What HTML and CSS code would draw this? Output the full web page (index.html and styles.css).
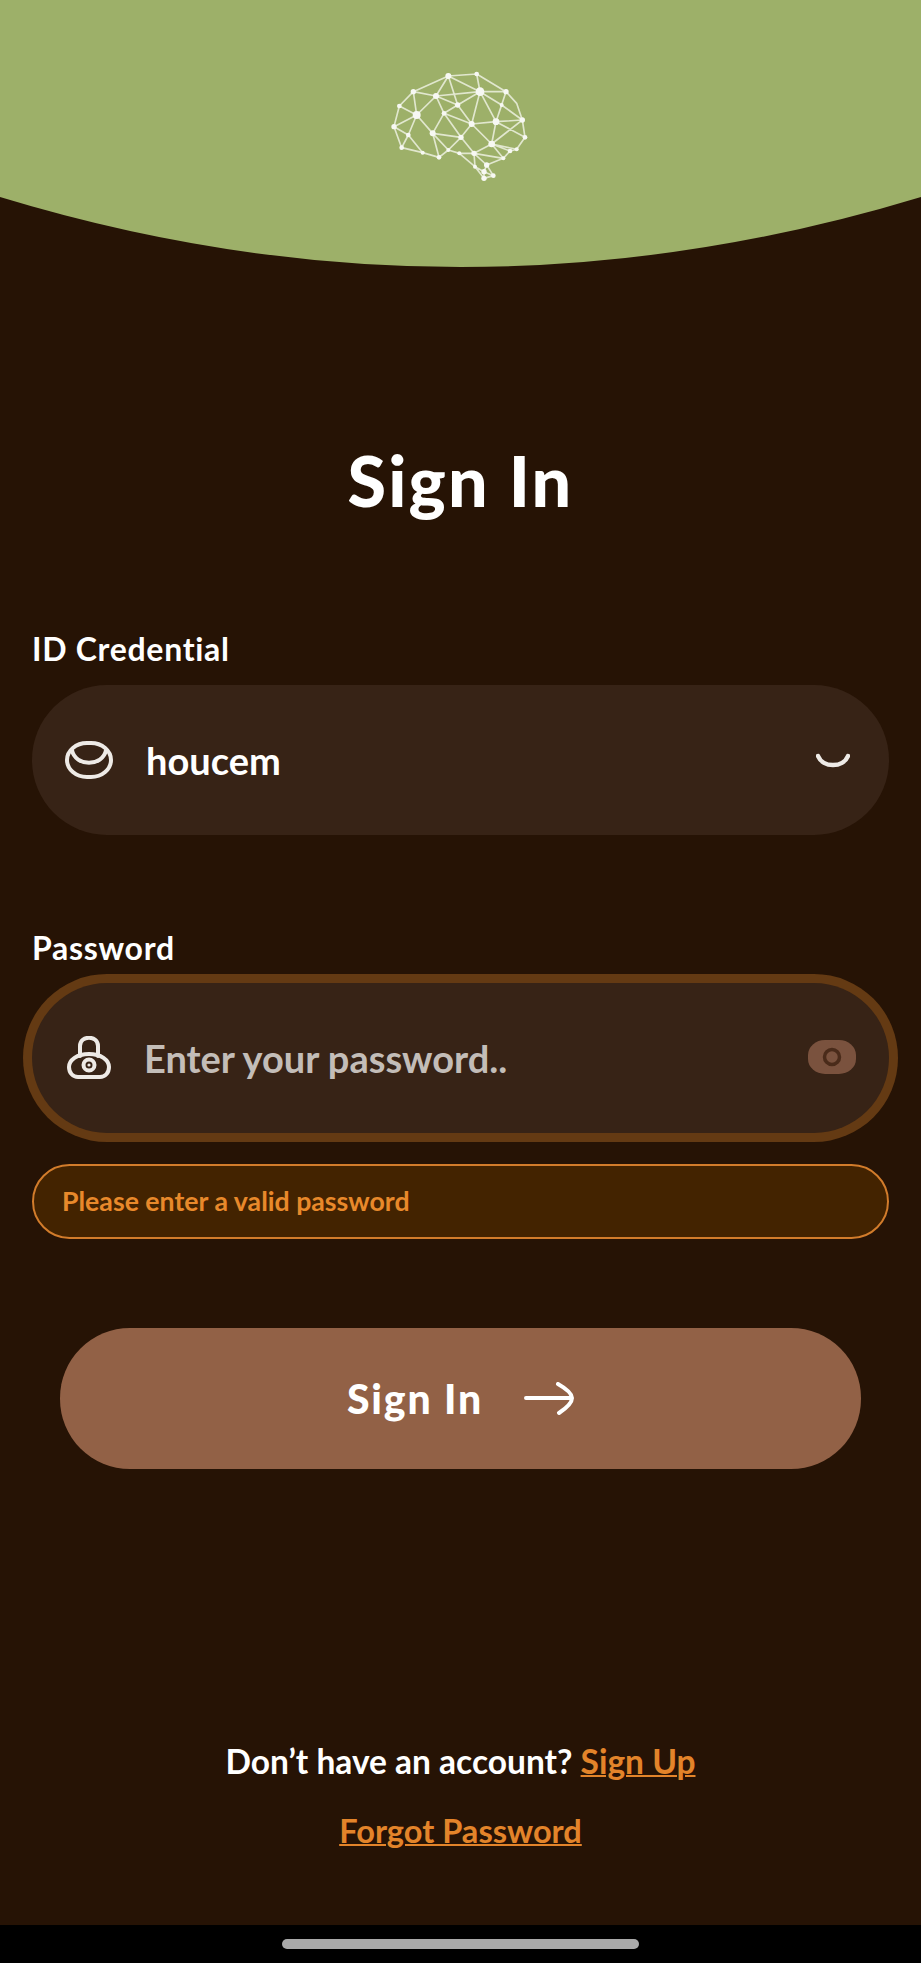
FILE: index.html
```html
<!DOCTYPE html>
<html lang="en">
<head>
<meta charset="utf-8">
<title>Sign In</title>
<link rel="stylesheet" href="styles.css">
</head>
<body>
<main class="app">
  <header class="hero">
    <svg class="brain" viewBox="0 0 540 450" width="180" height="150" aria-label="Brain logo">
      <g class="brain-glow">
        <path class="brain-lines" d="M265 78L350 72L438 125L470 160L487 210L495 262L470 298L450 303L430 325L380 345L400 377L372 385L345 350L298 310L265 300L237 322L188 308L125 293L102 230L118 168L160 125L265 78ZM265 78L228 138L160 125M228 138L360 125L438 125M265 78L293 165L360 125L350 72M265 78L360 125M360 125L335 222L293 165L228 138L170 195L118 168M160 125L170 195L102 230M170 195L145 255L102 230M145 255L125 293M145 255L188 308M170 195L218 250L237 322M228 138L252 190L218 250L303 262L335 222L252 190L293 165M252 190L303 262M360 125L408 215L438 125M360 125L425 165L408 215L335 222M425 165L487 210M408 215L487 210M408 215L495 262M335 222L395 282L408 215M395 282L450 303M395 282L470 298M395 282L487 210M395 282L342 310L303 262M303 262L265 300M303 262L342 310L380 345M395 282L430 325M342 310L430 325M342 310L345 350M298 310L342 310M218 250L265 300M372 365L380 345M372 365L400 377M372 365L372 385M345 350L372 365"/>
        <g class="brain-nodes">
          <circle cx="265" cy="78" r="9"/><circle cx="350" cy="72" r="7"/><circle cx="360" cy="125" r="13"/><circle cx="438" cy="125" r="8"/><circle cx="160" cy="125" r="8"/><circle cx="228" cy="138" r="9"/><circle cx="293" cy="165" r="8"/><circle cx="118" cy="168" r="7"/><circle cx="170" cy="195" r="12"/><circle cx="252" cy="190" r="7"/><circle cx="335" cy="222" r="9"/><circle cx="408" cy="215" r="10"/><circle cx="487" cy="210" r="8"/><circle cx="102" cy="230" r="8"/><circle cx="145" cy="255" r="7"/><circle cx="218" cy="250" r="9"/><circle cx="303" cy="262" r="8"/><circle cx="395" cy="282" r="10"/><circle cx="495" cy="262" r="7"/><circle cx="125" cy="293" r="7"/><circle cx="188" cy="308" r="6"/><circle cx="237" cy="322" r="7"/><circle cx="265" cy="300" r="6"/><circle cx="298" cy="310" r="6"/><circle cx="342" cy="310" r="8"/><circle cx="430" cy="325" r="6"/><circle cx="450" cy="303" r="7"/><circle cx="470" cy="298" r="6"/><circle cx="425" cy="165" r="6"/><circle cx="380" cy="345" r="8"/><circle cx="345" cy="350" r="6"/><circle cx="372" cy="385" r="8"/><circle cx="400" cy="377" r="7"/><circle cx="372" cy="365" r="8"/>
        </g>
      </g>
    </svg>
  </header>

  <h1 class="title">Sign In</h1>

  <form class="form">
    <label class="label">ID Credential</label>
    <div class="field">
      <svg class="field-icon" viewBox="0 0 48 38" width="48" height="38">
        <rect class="icon-stroke" x="2" y="2" width="44" height="34" rx="20" ry="17"/>
        <path class="icon-stroke" d="M7 9C10 26 38 26 41 9"/>
      </svg>
      <span class="value">houcem</span>
      <svg class="chevron" viewBox="0 0 34 16" width="34" height="16">
        <path class="icon-stroke" d="M2 3C7 15 27 15 32 3"/>
      </svg>
    </div>

    <label class="label label-password">Password</label>
    <div class="field field-focus">
      <svg class="field-icon" viewBox="0 0 44 44" width="44" height="44">
        <path class="icon-stroke" d="M13 20V10C13 -1 31 -1 31 10V20"/>
        <path class="icon-stroke" d="M22 18C34 18 42 24 42 31C42 37 38 41 33 41H11C6 41 2 37 2 31C2 24 10 18 22 18Z"/>
        <circle class="icon-stroke" cx="22" cy="29" r="5.5"/>
        <circle class="icon-dot" cx="22" cy="29" r="1.6"/>
      </svg>
      <span class="value placeholder">Enter your password..</span>
      <svg class="eye" viewBox="0 0 48 34" width="48" height="34">
        <rect class="eye-body" x="0" y="0" width="48" height="34" rx="17" ry="15"/>
        <circle class="eye-pupil" cx="24" cy="17" r="7.5"/>
      </svg>
    </div>

    <p class="error">Please enter a valid password</p>

    <button class="submit" type="button">
      <span>Sign In</span>
      <svg viewBox="0 0 50 34" width="50" height="34">
        <path class="arrow" d="M2 16H48M34 2C41 6 48 11 48 16C48 21 41 27 35 31"/>
      </svg>
    </button>
  </form>

  <footer class="links">
    <p class="link-line">Don’t have an account? <a href="#">Sign Up</a></p>
    <p class="link-line link-forgot"><a href="#">Forgot Password</a></p>
  </footer>

  <div class="navbar"><span class="nav-pill"></span></div>
</main>
</body>
</html>
```
FILE: styles.css
```css
* { box-sizing: border-box; }

html, body { margin: 0; padding: 0; }

body {
  background: #261305;
  font-family: "Lato", "Liberation Sans", sans-serif;
  color: #fff;
}

.app {
  width: 921px;
  height: 1963px;
  display: flex;
  flex-direction: column;
  overflow: hidden;
}

.hero {
  height: 267px;
  flex: none;
  background: #9db069;
  clip-path: path("M0 0H921V197Q460.5 337 0 197Z");
  display: flex;
  justify-content: center;
  padding-top: 50px;
}

.brain { display: block; margin-left: -21px; }
.brain-glow { filter: blur(1px); opacity: .92; }
.brain-lines { fill: none; stroke: #f3f6ea; stroke-width: 5; stroke-linejoin: round; opacity: .85; }
.brain-nodes circle { fill: #ffffff; }

.title {
  margin: 178px 0 0;
  height: 70px;
  line-height: 70px;
  text-align: center;
  font-size: 70px;
  font-weight: 900;
  letter-spacing: 2.2px;
}

.form {
  display: flex;
  flex-direction: column;
  padding: 0 32px;
  margin-top: 116px;
}

.label {
  font-size: 32px;
  font-weight: 700;
  line-height: 36px;
  letter-spacing: 0.7px;
  margin-bottom: 18px;
}

.label-password { margin-top: 95px; margin-bottom: 17px; }

.field {
  height: 150px;
  border-radius: 75px;
  background: #372316;
  display: flex;
  align-items: center;
  padding: 0 39px 0 33px;
}

.field-focus {
  box-shadow: 0 0 0 9px #643a13;
  padding-left: 35px;
  padding-right: 33px;
}

.field-icon { flex: none; display: block; }
.field-focus .field-icon { margin-right: 35px; }
.field .field-icon { margin-right: 33px; }

.icon-stroke {
  fill: none;
  stroke: #eeeae6;
  stroke-width: 4;
  stroke-linecap: round;
}

.icon-dot { fill: #eeeae6; }

.value {
  flex: 1;
  font-size: 38px;
  font-weight: 700;
  line-height: 44px;
}

.placeholder { color: #c3bdb8; font-weight: 700; }

.chevron { flex: none; display: block; margin-top: 2px; }
.chevron .icon-stroke { stroke-width: 4.5; }

.eye { flex: none; display: block; margin-top: -2px; }
.eye-body { fill: #7a523e; }
.eye-pupil { fill: #7a523e; stroke: #4a2b1a; stroke-width: 3.5; }

.error {
  margin: 31px 0 0;
  height: 75px;
  border: 2px solid #d27c2b;
  border-radius: 38px;
  background: #432300;
  color: #e8892b;
  font-size: 26.7px;
  font-weight: 700;
  line-height: 71px;
  padding-left: 28px;
}

.submit {
  align-self: center;
  width: 801px;
  height: 141px;
  margin-top: 89px;
  border: 0;
  border-radius: 70px;
  background: #926146;
  color: #fff;
  font: 900 41px "Lato", "Liberation Sans", sans-serif;
  letter-spacing: 1.8px;
  display: flex;
  align-items: center;
  justify-content: center;
  gap: 41px;
}

.submit svg { display: block; }

.arrow {
  fill: none;
  stroke: #fff;
  stroke-width: 4;
  stroke-linecap: round;
  stroke-linejoin: round;
}

.links {
  margin-top: 274px;
  display: flex;
  flex-direction: column;
  align-items: center;
  gap: 34px;
}

.link-line {
  margin: 0;
  font-size: 33.5px;
  font-weight: 700;
  line-height: 36px;
}

.link-forgot { font-size: 32.6px; }

.link-line a { color: #e3842a; text-decoration: underline; text-decoration-thickness: 2px; }

.navbar {
  margin-top: auto;
  height: 38px;
  flex: none;
  background: #000;
  display: flex;
  justify-content: center;
  padding-top: 14px;
}

.nav-pill {
  display: block;
  width: 357px;
  height: 10px;
  border-radius: 5px;
  background: #a9a9a9;
}
```
